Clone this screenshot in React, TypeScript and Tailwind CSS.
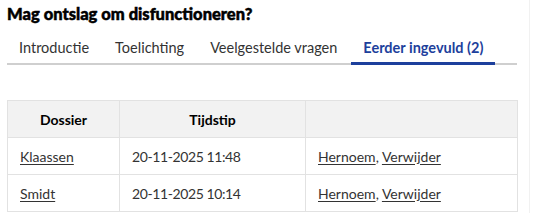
import React from 'react';

const tabs = ['Introductie', 'Toelichting', 'Veelgestelde vragen', 'Eerder ingevuld (2)'];

const rows = [
  { name: 'Klaassen', time: '20-11-2025 11:48' },
  { name: 'Smidt', time: '20-11-2025 10:14' },
];

export default function App() {
  const active = 3;

  return (
    <div className="w-[530px] min-h-[213px] bg-white border-r border-[#f1f1f1] text-[#222] font-['Lato',sans-serif]">
      <div className="pl-[7px] pr-[12px]">
        {/* Title */}
        <h1 className="pt-[3px] text-[16.5px] leading-[22px] font-black text-black [-webkit-text-stroke:0.5px_black]">
          Mag ontslag om disfunctioneren?
        </h1>

        {/* Tabs */}
        <nav className="mt-[13px] flex gap-[2px] border-b-2 border-[#cfcfcf]">
          {tabs.map((tab, i) => (
            <button
              key={tab}
              className={`shrink-0 whitespace-nowrap px-3 pb-[4px] -mb-[2px] text-[14.5px] leading-[20px] border-b-[3px] ${
                i === active
                  ? 'border-[#1d3f9c] text-[#1d3f9c] font-bold'
                  : 'border-transparent text-[#333]'
              }`}
            >
              {tab}
            </button>
          ))}
        </nav>

        {/* Previous entries */}
        <table className="mt-[35px] w-[511px] border-collapse text-[14px] text-[#333]">
          <thead>
            <tr className="bg-[#f2f2f2]">
              <th className="h-[37px] p-0 w-[112px] border border-[#e2e2e2] font-bold text-black">Dossier</th>
              <th className="h-[37px] p-0 w-[186px] border border-[#e2e2e2] font-bold text-black">Tijdstip</th>
              <th className="h-[37px] p-0 border border-[#e2e2e2]"></th>
            </tr>
          </thead>
          <tbody>
            {rows.map((row) => (
              <tr key={row.name}>
                <td className="h-[37px] py-0 border border-[#e2e2e2] px-3">
                  <a href="#" className="underline underline-offset-2">{row.name}</a>
                </td>
                <td className="h-[37px] py-0 border border-[#e2e2e2] px-3 tracking-[-0.4px]">{row.time}</td>
                <td className="h-[37px] py-0 border border-[#e2e2e2] px-3">
                  <a href="#" className="underline underline-offset-2">Hernoem</a>,{' '}
                  <a href="#" className="underline underline-offset-2">Verwijder</a>
                </td>
              </tr>
            ))}
          </tbody>
        </table>
      </div>
    </div>
  );
}
